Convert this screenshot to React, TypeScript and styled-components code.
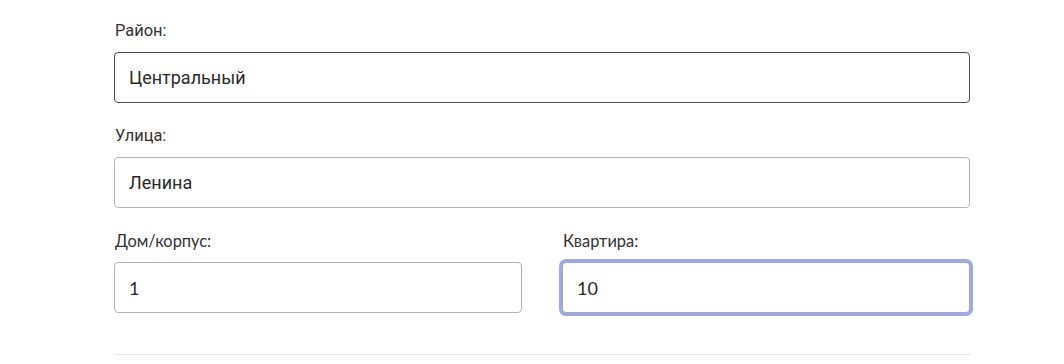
import React from "react";
import styled, { createGlobalStyle } from "styled-components";

const Global = createGlobalStyle`
  html, body { margin: 0; padding: 0; background: #ffffff; }
  body { font-family: Roboto, "Noto Sans", Arial, sans-serif; }
  * { box-sizing: border-box; }
`;

const Form = styled.form`
  width: 856px;
  margin-left: 114px;
  padding-top: 21px;
  display: flex;
  flex-direction: column;
  gap: 23px;
`;

const Row = styled.div`
  display: grid;
  grid-template-columns: 1fr 1fr;
  column-gap: 40px;
`;

const Field = styled.div`
  display: flex;
  flex-direction: column;
  gap: 11px;
`;

const Label = styled.label<{ $font?: string }>`
  font-family: ${(p) => p.$font ?? "Roboto"}, Arial, sans-serif;
  font-size: 16.4px;
  line-height: 20px;
  color: #333333;
  padding-left: 1px;
`;

const Input = styled.input<{ $variant?: "dark" | "normal" | "focus"; $font?: string }>`
  height: 51px;
  width: 100%;
  padding: 0 14px;
  font-family: ${(p) => p.$font ?? "Roboto"}, Arial, sans-serif;
  font-size: 18px;
  color: #2a2a2a;
  background: #ffffff;
  border-radius: 4px;
  outline: none;
  border: 1px solid
    ${(p) => (p.$variant === "dark" ? "#4d4d4d" : p.$variant === "focus" ? "#9ea8e2" : "#b3b3b3")};
  box-shadow: ${(p) => (p.$variant === "focus" ? "0 0 0 3px #9ea8e2" : "none")};
`;

const Divider = styled.hr`
  margin: 18px 0 0;
  border: none;
  border-top: 1px solid #e6e6e6;
`;

export default function App() {
  return (
    <>
      <Global />
      <Form onSubmit={(e) => e.preventDefault()}>
        <Field>
          <Label htmlFor="district">Район:</Label>
          <Input id="district" $variant="dark" defaultValue="Центральный" />
        </Field>
        <Field>
          <Label htmlFor="street">Улица:</Label>
          <Input id="street" defaultValue="Ленина" />
        </Field>
        <Row>
          <Field>
            <Label htmlFor="house" $font="Lato">Дом/корпус:</Label>
            <Input id="house" $font="Lato" defaultValue="1" />
          </Field>
          <Field>
            <Label htmlFor="flat" $font="Lato">Квартира:</Label>
            <Input id="flat" $font="Lato" $variant="focus" defaultValue="10" />
          </Field>
        </Row>
        <Divider />
      </Form>
    </>
  );
}
